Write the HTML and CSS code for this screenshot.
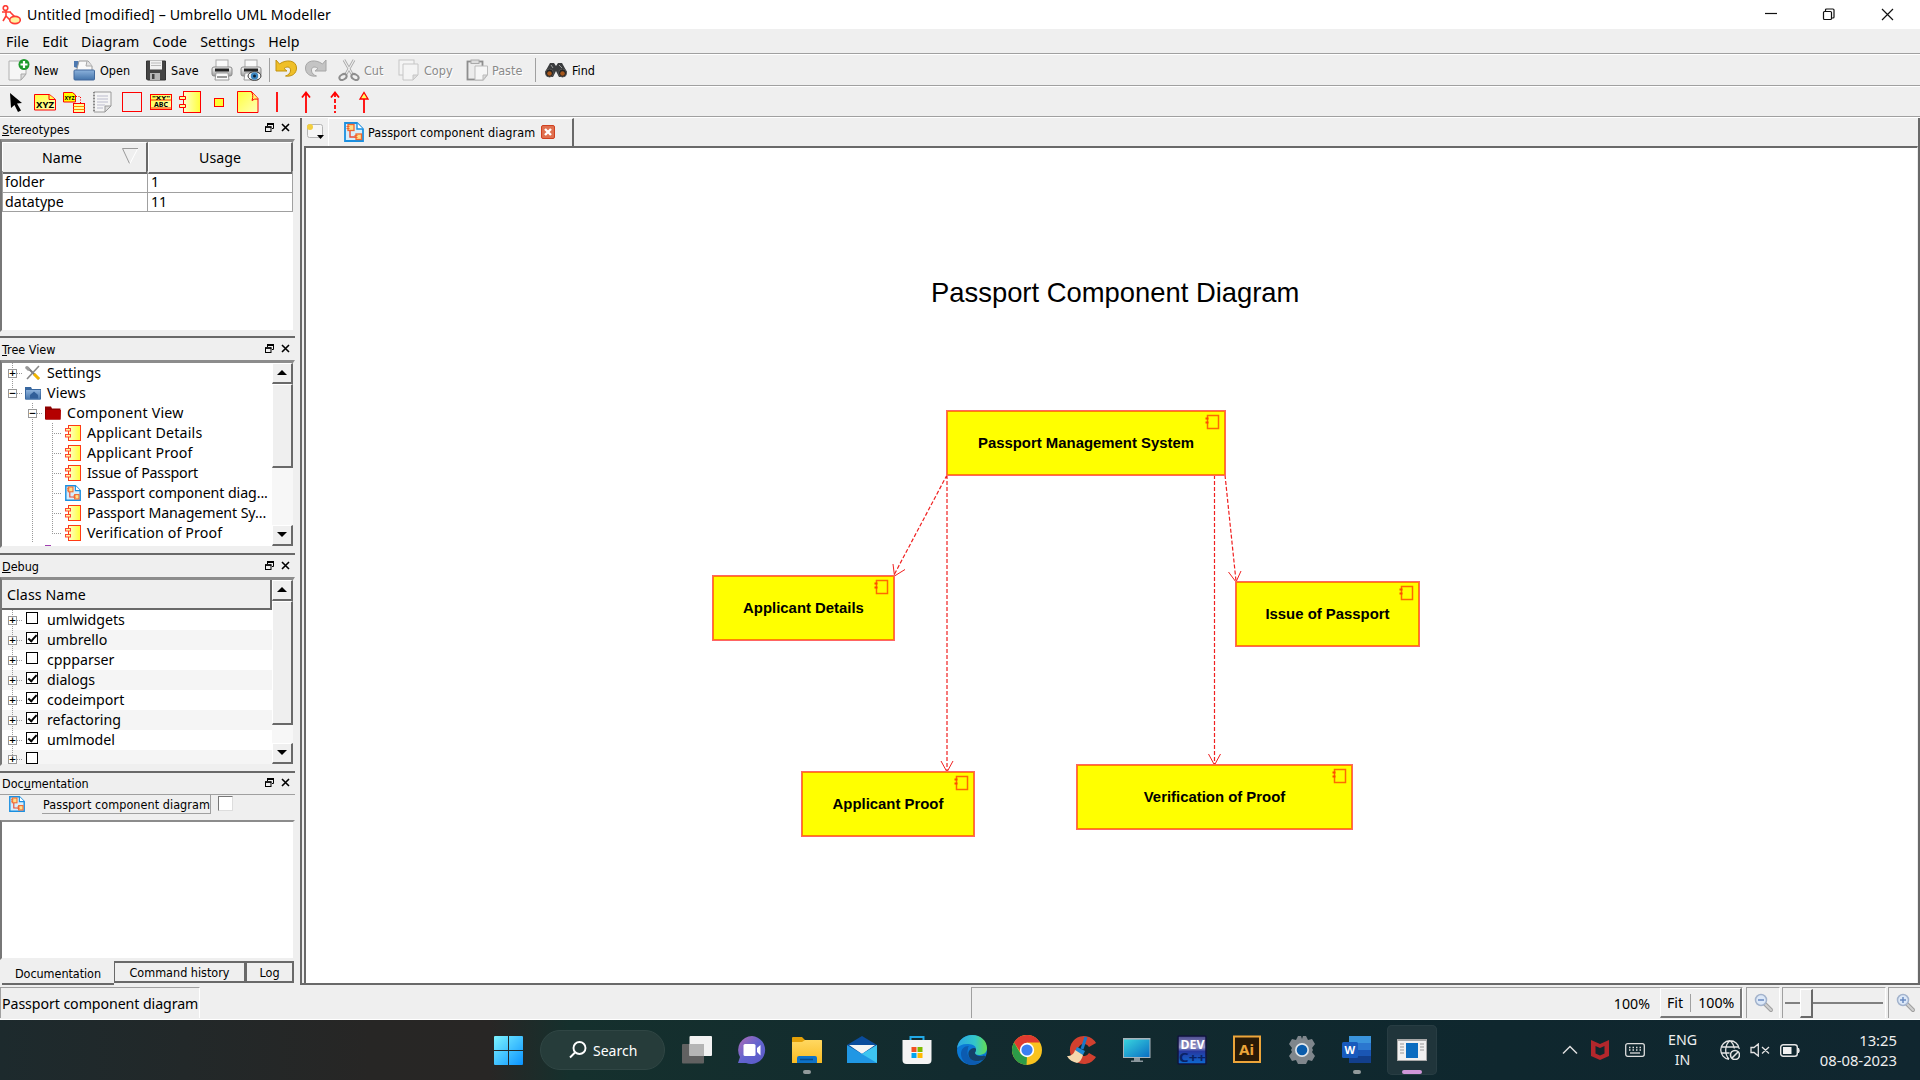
FILE: index.html
```html
<!DOCTYPE html>
<html lang="en">
<head>
<meta charset="utf-8">
<title>Umbrello UML Modeller</title>
<link rel="stylesheet" href="styles.css">
</head>
<body>
<svg class="defs" width="0" height="0">
  <defs>
    <linearGradient id="gy" x1="0" y1="0" x2="1" y2="1"><stop offset="0" stop-color="#ffff3c"/><stop offset="1" stop-color="#ffffb8"/></linearGradient>
    <linearGradient id="gc" x1="0" y1="0" x2="1" y2="0"><stop offset="0" stop-color="#ffffd0"/><stop offset="1" stop-color="#ffff38"/></linearGradient>
    <linearGradient id="gw" x1="0" y1="0" x2="1" y2="1"><stop offset="0" stop-color="#7cf3ff"/><stop offset="1" stop-color="#0a93ff"/></linearGradient>
    <linearGradient id="gg" x1="0" y1="0" x2="0" y2="1"><stop offset="0" stop-color="#fafafa"/><stop offset="1" stop-color="#9c9c9c"/></linearGradient>
    <linearGradient id="gb" x1="0" y1="0" x2="0" y2="1"><stop offset="0" stop-color="#8cb2dc"/><stop offset="1" stop-color="#4474ab"/></linearGradient>
    <linearGradient id="gp" x1="0" y1="0" x2="1" y2="1"><stop offset="0" stop-color="#b36bb4"/><stop offset=".5" stop-color="#6264cf"/><stop offset="1" stop-color="#5a58c6"/></linearGradient>
    <linearGradient id="gf" x1="0" y1="0" x2="0" y2="1"><stop offset="0" stop-color="#ffd861"/><stop offset="1" stop-color="#f9bb22"/></linearGradient>
    <linearGradient id="gm" x1="0" y1="0" x2="1" y2="1"><stop offset="0" stop-color="#38d4de"/><stop offset="1" stop-color="#0a6fc4"/></linearGradient>
    <linearGradient id="ge" x1="0" y1="0" x2="1" y2="0"><stop offset="0" stop-color="#2aa6e4"/><stop offset=".6" stop-color="#33c6c9"/><stop offset="1" stop-color="#63dc52"/></linearGradient>
    <linearGradient id="gd" x1="0" y1="0" x2="0" y2="1"><stop offset="0" stop-color="#4a4a90"/><stop offset=".4" stop-color="#9a9ac8"/><stop offset=".55" stop-color="#2638a0"/><stop offset="1" stop-color="#0d6bd2"/></linearGradient>
    <symbol id="comp" viewBox="0 0 16 16"><rect x="3.5" y=".5" width="12" height="15" fill="url(#gc)" stroke="#ff3b14"/><rect x=".5" y="3.5" width="5" height="2.500" fill="#fff9a0" stroke="#f43"/><rect x=".5" y="9.500" width="5" height="2.500" fill="#fff9a0" stroke="#f43"/></symbol>
    <symbol id="diag" viewBox="0 0 20 20"><path d="M1 1h12l6 6v12H1z" fill="#d6eefc" stroke="#1a8fe0" stroke-width="1.800"/><path d="M13 1v6h6" fill="#fff" stroke="#1a8fe0" stroke-width="1.400"/><path d="M6 8v7h6" fill="none" stroke="#ea4a34" stroke-width="1.400"/><rect x="4" y="2.500" width="6" height="6" fill="#ffdf8a" stroke="#f2662f" stroke-width="1.300"/><path d="M2.500 4.500h3M2.500 6.500h3" stroke="#f2662f"/><rect x="12" y="12" width="5.500" height="5.500" fill="#ffdf8a" stroke="#f2662f" stroke-width="1.300"/><path d="M10.500 13.500h3M10.500 15.500h3" stroke="#f2662f"/></symbol>
    <symbol id="float" viewBox="0 0 9 9"><path d="M2.500 3V1.500h6v4H7" fill="none" stroke="#000"/><path d="M2 1h7" stroke="#000" stroke-width="2"/><rect x=".5" y="4" width="5.500" height="4.500" fill="#efefef" stroke="#000"/><path d="M0 4h6.500" stroke="#000" stroke-width="1.500"/></symbol>
    <symbol id="x" viewBox="0 0 9 9"><path d="M1 1l7 7M8 1L1 8" stroke="#000" stroke-width="1.600"/></symbol>
    <symbol id="nodeicon" viewBox="0 0 16 16"><rect x="3.500" y="1.500" width="11" height="13" fill="none" stroke="#ff6a00" stroke-width="1.500"/><path d="M1.500 4.500h3M1.500 8.500h3" stroke="#ff4a00" stroke-width="2"/></symbol>
    <symbol id="mag" viewBox="0 0 20 20"><path d="M11 11l6 6" stroke="#9f9f9f" stroke-width="4" stroke-linecap="round"/><path d="M11 11l6 6" stroke="#d0d0d0" stroke-width="2" stroke-linecap="round"/><circle cx="7" cy="7" r="5.500" fill="#dce8f8" stroke="#a3b3cc" stroke-width="1.500"/></symbol>
  </defs>
</svg>

<div class="window">
  <header class="titlebar">
    <svg class="appicon" width="20" height="20" viewBox="0 0 20 20" fill="none" stroke="#ff3c34" stroke-width="1.600"><circle cx="4.500" cy="3" r="2.300"/><path d="M1 7h9M5 6v6M5 11l-3 5M5 11l4 4M9 7l5 5"/><ellipse cx="14" cy="15" rx="5.300" ry="3.600" fill="#fff3a0"/></svg>
    <span class="caption">Untitled [modified] – Umbrello UML Modeller</span>
    <svg class="winbtns" width="130" height="16" viewBox="0 0 130 16" fill="none" stroke="#111" stroke-width="1.200"><path d="M1 6.500h12"/><rect x="59.500" y="4.500" width="8" height="8" rx="1"/><path d="M61.500 4V3q0-1 1-1h6.500q1 0 1 1v7q0 1-1 1h-1"/><path d="M118 2l11 11M129 2l-11 11"/></svg>
  </header>

  <nav class="menubar"><span>File</span><span>Edit</span><span>Diagram</span><span>Code</span><span>Settings</span><span>Help</span></nav>

  <div class="toolbar">
    <div class="tb w65"><svg viewBox="0 0 22 22"><path d="M1 2h17v13l-5 6H1z" fill="#f6f6f6" stroke="#b0b0b0"/><path d="M18 15h-5v6z" fill="#ddd" stroke="#aaa"/><circle cx="16" cy="5.500" r="5.500" fill="#1d9a2c"/><path d="M16 2v7M12.500 5.500h7" stroke="#fff" stroke-width="2.200"/></svg><span>New</span></div>
    <div class="tb w73"><svg viewBox="0 0 22 22"><path d="M1 8V2h4l2 2v6" fill="#4c78b0"/><path d="M4 10l2-8h9l4 5v6H3z" fill="#fafafa" stroke="#9a9a9a"/><path d="M14 2l-1 5h6" fill="#e4e4e4" stroke="#aaa"/><rect x="1" y="11" width="20.500" height="10" rx="1" fill="url(#gb)" stroke="#42699c"/></svg><span>Open</span></div>
    <div class="tb w66"><svg viewBox="0 0 22 22"><path d="M1.500 2h19v19h-18l-1-1z" fill="#444" stroke="#333"/><rect x="5" y="1.500" width="12" height="9" fill="#f2f2f2"/><path d="M6 4h10M6 6.500h10" stroke="#bbb"/><rect x="5" y="14" width="10" height="7" fill="#b7b7b7"/><rect x="7" y="15" width="2.500" height="5" fill="#444"/></svg><span>Save</span></div>
    <div class="tb w29"><svg viewBox="0 0 22 22"><rect x="5" y="1" width="12" height="9" fill="#fafafa" stroke="#aaa"/><rect x="1" y="8" width="20" height="9" rx="2" fill="url(#gg)" stroke="#888"/><path d="M4 11h14" stroke="#222" stroke-width="3"/><path d="M5 14h12l1 7H4z" fill="#fafafa" stroke="#999"/><path d="M6 18h10" stroke="#777" stroke-width="1.500"/></svg></div>
    <div class="tb w29"><svg viewBox="0 0 22 22"><rect x="5" y="1" width="12" height="9" fill="#fafafa" stroke="#aaa"/><rect x="1" y="8" width="20" height="9" rx="2" fill="url(#gg)" stroke="#888"/><path d="M4 11h14" stroke="#222" stroke-width="3"/><path d="M5 14h12l1 7H4z" fill="#fafafa" stroke="#999"/><ellipse cx="14.500" cy="17" rx="6.500" ry="4.300" fill="#f4f4f4" stroke="#333"/><circle cx="14.500" cy="17" r="3.700" fill="#3c86c0"/><circle cx="14.500" cy="17" r="1.500" fill="#123"/></svg></div>
    <i class="vsep"></i>
    <div class="tb w30"><svg viewBox="0 0 22 22"><path d="M1 1v11h11L9 9.500c4-3 7-1 6.500 2.500-.5 2.500-2 4-5 5 6.500 1 11-2.500 11-8C21.500 1 11 0 4.500 5z" fill="#efbf28" stroke="#c2920f"/></svg></div>
    <div class="tb w33"><svg viewBox="0 0 22 22"><path d="M21 1v11H10l3-2.500C9 6.500 6 8.500 6.500 12c.5 2.500 2 4 5 5C5 18 .5 14.500.5 9 .5 1 11 0 17.500 5z" fill="#c4c4c4" stroke="#a6a6a6"/></svg></div>
    <div class="tb w60 off"><svg viewBox="0 0 22 22" fill="none"><path d="M6 1l8 14M16 1L8 15" stroke="#a8a8a8" stroke-width="2.800"/><path d="M6 1l8 14M16 1L8 15" stroke="#eee" stroke-width="1.200"/><ellipse cx="5" cy="18" rx="3.800" ry="2.600" stroke="#8e8e8e" stroke-width="2" transform="rotate(-30 5 18)"/><ellipse cx="17" cy="18" rx="3.800" ry="2.600" stroke="#8e8e8e" stroke-width="2" transform="rotate(30 17 18)"/></svg><span>Cut</span></div>
    <div class="tb w68 off"><svg viewBox="0 0 22 22" fill="#f4f4f4" stroke="#c6c6c6"><rect x="1" y="1" width="15" height="15"/><path d="M5 5h15v11l-5 5H5z"/><path d="M20 16h-5v5z" fill="#ddd"/></svg><span>Copy</span></div>
    <div class="tb w70 off"><svg viewBox="0 0 22 22"><rect x="1.500" y="2.500" width="15" height="18" fill="#ececec" stroke="#8e8e8e" stroke-width="1.800"/><rect x="5" y="1" width="8" height="3.500" fill="#ddd" stroke="#aaa"/><path d="M9 7h12.500v9l-4 5H9z" fill="#f6f6f6" stroke="#bbb"/><path d="M21 16h-4v5z" fill="#ddd" stroke="#bbb"/></svg><span>Paste</span></div>
    <i class="vsep wide"></i>
    <div class="tb find"><svg viewBox="0 0 22 22"><path d="M5 4h4l2 3 2-3h4l5 9-3 5h-5l-3-6-3 6H3l-3-5z" fill="#3a3c3e"/><path d="M6 6l2 3M14 6l3 3" stroke="#9a9a9a"/><circle cx="4.500" cy="14" r="4" fill="#222" stroke="#555"/><circle cx="17.500" cy="14" r="4" fill="#222" stroke="#555"/><circle cx="4.500" cy="14.500" r="2.300" fill="#a7571b"/><circle cx="17.500" cy="14.500" r="2.300" fill="#a7571b"/></svg><span>Find</span></div>
  </div>

  <div class="toolbar tools">
    <svg viewBox="0 0 22 22"><path d="M5 2l12 10-5 .5 4 7-3 1.500-3.500-7L6 17z"/></svg>
    <svg viewBox="0 0 22 22"><path d="M.5 3.500h15l6 5v10.500H.5z" fill="url(#gy)" stroke="red"/><path d="M15 3.500v5h6" fill="#ffff50" stroke="red"/><text x="2" y="16.500" font-size="9" font-weight="bold" textLength="18" lengthAdjust="spacingAndGlyphs">XYZ</text></svg>
    <svg viewBox="0 0 22 22"><path d="M.5 1.500h9l3 2.500v7H.5z" fill="#ff0" stroke="red"/><text x="1.500" y="9" font-size="6" font-weight="bold" textLength="10" lengthAdjust="spacingAndGlyphs">XYZ</text><path d="M13 5.500h4.500V12" fill="none" stroke="red" stroke-dasharray="1 1.500"/><rect x="10.500" y="12.500" width="11" height="9" fill="#ff9" stroke="red"/><path d="M10.500 15.500h11M10.500 18.500h11" stroke="#f80"/></svg>
    <svg viewBox="0 0 22 22"><path d="M2 1h17v14l-6 6H2z" fill="#f5f5f5" stroke="#999"/><path d="M19 15h-6v6z" fill="#ddd" stroke="#999"/><path d="M5 5h11M5 8h11M5 11h11M5 14h8M5 17h6" stroke="#bbc"/><path d="M2 1v20" stroke="#888" stroke-dasharray="1 2" stroke-width="2"/></svg>
    <svg viewBox="0 0 22 22"><rect x="1.500" y="1.500" width="19" height="19" fill="none" stroke="red"/></svg>
    <svg viewBox="0 0 22 22"><rect x=".5" y="3.500" width="21" height="15" fill="url(#gy)" stroke="red"/><path d="M.5 9h21M.5 17h21" stroke="#f30"/><text x="2" y="8.500" font-size="5.500" font-weight="bold" textLength="18" lengthAdjust="spacingAndGlyphs">"XY"</text><text x="4" y="15.500" font-size="7" font-weight="bold" textLength="14" lengthAdjust="spacingAndGlyphs">ABC</text></svg>
    <svg viewBox="0 0 22 22"><rect x="4.500" y=".5" width="17" height="21" fill="url(#gc)" stroke="red"/><path d="M.5 5.500h6v3h-6zM.5 13.500h6v3h-6z" fill="#ff9" stroke="red"/></svg>
    <svg viewBox="0 0 22 22"><rect x="6.500" y="7.500" width="9" height="8" fill="#ff3" stroke="red"/></svg>
    <svg viewBox="0 0 22 22"><path d="M.5.500h14l6.500 7v14H.5z" fill="url(#gy)" stroke="red"/><path d="M14 .5q3 3 1 9 2-2 6-1.500" fill="#ffff70" stroke="red"/></svg>
    <svg viewBox="0 0 22 22"><path d="M11 1v20" stroke="red" stroke-width="1.800"/></svg>
    <svg viewBox="0 0 22 22" fill="none" stroke="red" stroke-width="1.800"><path d="M11 2v20M7 6.500l4-5 4 5"/></svg>
    <svg viewBox="0 0 22 22" fill="none" stroke="red" stroke-width="1.800"><path d="M11 2v20" stroke-dasharray="4 2"/><path d="M7 6.500l4-5 4 5"/></svg>
    <svg viewBox="0 0 22 22"><path d="M11 7v15" stroke="red" stroke-width="1.800"/><path d="M7 8l4-6.500L15 8z" fill="#ff6" stroke="red" stroke-width="1.300"/></svg>
  </div>

  <main class="main">
    <aside class="docks">
      <section class="dock stereo">
        <h2><span><u>S</u>tereotypes</span><svg><use href="#float"/></svg><svg><use href="#x"/></svg></h2>
        <div class="frame">
          <div class="grid2 head"><span>Name<svg class="sort" width="16" height="16" viewBox="0 0 16 16" fill="none"><path d="M16 .5H.5L7.500 15.500" stroke="#999"/><path d="M15.500 1L8 15.500" stroke="#fff"/></svg></span><span>Usage</span></div>
          <div class="grid2"><span>folder</span><span>1</span></div>
          <div class="grid2"><span>datatype</span><span>11</span></div>
        </div>
      </section>
      <section class="dock treeview">
        <h2><span><u>T</u>ree View</span><svg><use href="#float"/></svg><svg><use href="#x"/></svg></h2>
        <div class="frame split">
          <ul class="tree">
            <li class="l0"><i class="pm">+</i><svg viewBox="0 0 16 16"><path d="M2 2l12 12" stroke="#777" stroke-width="2"/><path d="M14 1L2 14" stroke="#888" stroke-width="1.600"/><path d="M9 9l5 5" stroke="#f0b400" stroke-width="3"/><path d="M1 1l3 1 1 3-2 1-3-3z" fill="#999"/></svg>Settings</li>
            <li class="l0 loose"><i class="pm">−</i><svg viewBox="0 0 16 16"><path d="M0 2h6l1 2h9v10.500H0z" fill="#3968a0"/><path d="M1 5h14.500l-.5 9.500H1z" fill="url(#gb)"/><path d="M5 10l4-3.500 4 3.500v3.500H5z" fill="#315f99"/></svg>Views</li>
            <li class="l1 loose"><i class="pm">−</i><svg viewBox="0 0 16 16"><path d="M0 1.500h6l1 2h8.500v11H0z" fill="#8e0000"/><path d="M1 5h15l-.5 9.500H1z" fill="#b40000"/></svg>Component View</li>
            <li class="l2 loose"><svg><use href="#comp"/></svg>Applicant Details</li>
            <li class="l2 loose"><svg><use href="#comp"/></svg>Applicant Proof</li>
            <li class="l2 tight"><svg><use href="#comp"/></svg>Issue of Passport</li>
            <li class="l2 snug"><svg><use href="#diag"/></svg>Passport component diag...</li>
            <li class="l2 snug"><svg><use href="#comp"/></svg>Passport Management Sy...</li>
            <li class="l2 last"><svg><use href="#comp"/></svg>Verification of Proof</li>
            <li class="l1 peek"><b></b></li>
          </ul>
          <div class="scroll"><i class="up"></i><i class="thumb t1"></i><em></em><i class="down"></i></div>
        </div>
      </section>
      <section class="dock debug">
        <h2><span><u>D</u>ebug</span><svg><use href="#float"/></svg><svg><use href="#x"/></svg></h2>
        <div class="frame split">
          <div class="debuglist">
            <div class="classname">Class Name</div>
            <ul class="checks">
              <li><i class="pm">+</i><i class="box"></i>umlwidgets</li>
              <li><i class="pm">+</i><i class="box on"></i>umbrello</li>
              <li><i class="pm">+</i><i class="box"></i>cppparser</li>
              <li><i class="pm">+</i><i class="box on"></i>dialogs</li>
              <li><i class="pm">+</i><i class="box on"></i>codeimport</li>
              <li><i class="pm">+</i><i class="box on"></i>refactoring</li>
              <li><i class="pm">+</i><i class="box on"></i>umlmodel</li>
              <li class="cut"><i class="pm">+</i><i class="box"></i></li>
            </ul>
          </div>
          <div class="scroll"><i class="up"></i><i class="thumb t2"></i><em></em><i class="down"></i></div>
        </div>
      </section>
      <section class="dock docs">
        <h2><span>Doc<u>u</u>mentation</span><svg><use href="#float"/></svg><svg><use href="#x"/></svg></h2>
        <div class="docrow"><svg><use href="#diag"/></svg><span>Passport component diagram</span><i></i></div>
        <div class="frame"></div>
        <div class="docktabs"><span class="sel">Documentation</span><span>Command history</span><span>Log</span></div>
      </section>
    </aside>

    <section class="workspace">
      <div class="tabs">
        <svg class="newtab" width="20" height="17" viewBox="0 0 20 17"><rect x="1.500" y="1.500" width="15" height="13" rx="2" fill="#f6f6f6" stroke="#b4b4b4"/><circle cx="4" cy="4" r="3" fill="#f3cf3f"/><path d="M11 12h7l-3.500 4z"/></svg>
        <div class="tab"><svg class="tabicon"><use href="#diag"/></svg><span>Passport component diagram</span><svg class="close" viewBox="0 0 14 14"><rect x=".5" y=".5" width="13" height="13" rx="1.500" fill="#e0704f" stroke="#cf4020"/><path d="M4 4l6 6M10 4l-6 6" stroke="#fff" stroke-width="2.400"/></svg></div>
      </div>
      <div class="canvas">
        <svg class="links" width="1609" height="834" viewBox="306 148 1609 834" fill="none" stroke="#f02020">
          <g stroke-dasharray="4 2" stroke-width="1.200"><path d="M947 475L894 575M947 475V771M1214.500 475V764M1225 475L1236 581"/></g>
          <g><path d="M893 564l1.500 12 10.500-6.500M941 761l6 11 6-11M1208.500 754l6 11 6-11M1228.500 572l7.500 10 5-11"/></g>
        </svg>
        <div class="heading">Passport Component Diagram</div>
        <div class="node pms">Passport Management System<svg><use href="#nodeicon"/></svg></div>
        <div class="node ad">Applicant Details<svg><use href="#nodeicon"/></svg></div>
        <div class="node iop">Issue of Passport<svg><use href="#nodeicon"/></svg></div>
        <div class="node ap">Applicant Proof<svg><use href="#nodeicon"/></svg></div>
        <div class="node vop">Verification of Proof<svg><use href="#nodeicon"/></svg></div>
      </div>
    </section>
  </main>

  <footer class="status">
    <div class="cell msg">Passport component diagram</div>
    <div class="cell zoomcell"><span>100%</span><div class="fit"><span>Fit</span><span>100%</span></div></div>
    <div class="cell mag"><svg width="20" height="20"><use href="#mag"/><path d="M4 7h6" stroke="#6a8ac0" stroke-width="1.500"/></svg></div>
    <div class="cell slider"><i class="a"></i><i class="knob"></i><i class="b"></i></div>
    <div class="cell mag last"><svg width="20" height="20"><use href="#mag"/><path d="M4 7h6M7 4v6" stroke="#6a8ac0" stroke-width="1.500"/></svg></div>
  </footer>
</div>

<div class="taskbar">
  <svg class="start" width="29" height="29" viewBox="0 0 29 29"><path d="M0 1q0-1 1-1h13v14H0zM15 0h13q1 0 1 1v13H15zM0 15h14v14H1q-1 0-1-1zM15 15h14v13q0 1-1 1H15z" fill="url(#gw)"/></svg>
  <div class="search"><svg width="18" height="18" viewBox="0 0 18 18" fill="none" stroke="#fff" stroke-width="1.900"><circle cx="10.500" cy="7" r="6"/><path d="M6 11.500L1 16.500"/></svg>Search</div>
  <div class="apps">
    <div><svg viewBox="0 0 30 30"><rect x="0" y="9" width="22" height="19.500" rx="1" fill="#616161"/><rect x="7.500" y="1" width="22.500" height="20" rx="1" fill="#f2f2f2"/><rect x="7.500" y="9" width="14.500" height="12" fill="#b5b5b5"/></svg></div>
    <div><svg viewBox="0 0 30 30"><path d="M15 1a14 14 0 1 1-6 27H1l2-6A14 14 0 0 1 15 1z" fill="url(#gp)"/><rect x="6.500" y="9" width="12" height="12" rx="1.500" fill="#fff"/><path d="M20 13l3.500-3v10.500L20 17z" fill="#fff"/></svg></div>
    <div class="run"><svg viewBox="0 0 30 30"><path d="M0 3q0-1 1-1h9l3 3h16q1 0 1 1v22H0z" fill="#e3a008"/><path d="M0 7h10l3-2h16q1 0 1 1v22H0z" fill="url(#gf)"/><path d="M5 28v-5q0-2 2-2h16q2 0 2 2v5z" fill="#0d72c8"/><path d="M8 24.500h13" stroke="#074a8a" stroke-width="1.500"/></svg></div>
    <div><svg viewBox="0 0 30 30"><path d="M0 10L15 1l15 9-15 10z" fill="#0a4c9c"/><path d="M2 10h26l-13 9z" fill="#f4f4f4"/><path d="M0 10l15 9 15-9v18H0z" fill="#2097e4"/><path d="M30 10v18L15 19z" fill="#3dc5f0"/></svg></div>
    <div><svg viewBox="0 0 30 30"><path d="M8.500 6V2h13v4" fill="none" stroke="#21a9e6" stroke-width="2"/><path d="M.5 5h29v20q0 4-4 4h-21q-4 0-4-4z" fill="#f4f4f4"/><path d="M9.500 12h5v5h-5z" fill="#f25022"/><path d="M15.500 12h5v5h-5z" fill="#7fba00"/><path d="M9.500 18h5v5h-5z" fill="#00a4ef"/><path d="M15.500 18h5v5h-5z" fill="#ffb900"/></svg></div>
    <div><svg viewBox="0 0 30 30"><circle cx="15" cy="15" r="15" fill="#0b78d4"/><path d="M0 13C1 5 8 0 15 0c9 0 15 6 15 13 0 5-4 7-8 7-3 0-4-1-4-2 0-1 1-1 1-4 0-4-5-5-9-5-5 0-8 2-10 4z" fill="url(#ge)"/><path d="M11 14c-2 5 1 14 13 12-2 3-6 4-9 4C8 30 4 24 4 19s3-8 8-8c-1 1-1 2-1 3z" fill="#0c5bb0"/><path d="M19 14c0 3-1 3-1 4 0 2 4 4 9 2.500l2 1C27 26 22 26 19 26c-6 0-9-6-7-10 2-3 6-4 7-2z" fill="#15406a"/></svg></div>
    <div><svg viewBox="0 0 30 30"><circle cx="15" cy="15" r="15" fill="#f9c31f"/><path d="M2 7.500A15 15 0 0 1 28 7.500H15L9 18z" fill="#e03a2f"/><path d="M2 7.500l6.500 11L15 22l-.5 8A15 15 0 0 1 2 7.500z" fill="#2c9b48"/><circle cx="15" cy="15" r="7.200" fill="#fff"/><circle cx="15" cy="15" r="5.600" fill="#3b7ff0"/></svg></div>
    <div><svg viewBox="0 0 30 30"><path d="M29 8a14 14 0 1 0 0 14l-7-4a6 6 0 1 1 0-6z" fill="#d2402f"/><path d="M19 2l-4 12" stroke="#1a78c8" stroke-width="3"/><path d="M10 12l8 4-2 4-8-4z" fill="#1e86d4"/><path d="M8 15l8 5c-1 4-3 7-6 8-4-1-8-3-10-7 4 0 7-2 8-6z" fill="#f5d8ae"/></svg></div>
    <div><svg viewBox="0 0 30 30"><rect x="1" y="3" width="27.500" height="20" fill="#a9b4bb"/><rect x="2" y="4.500" width="25.500" height="17.500" fill="url(#gm)"/><path d="M12 23h6v2.500h3V27H9v-1.500h3z" fill="#8b979d"/></svg></div>
    <div><svg viewBox="0 0 30 30"><rect x="1" y="1" width="28" height="28" rx="1" fill="url(#gd)" stroke="#10143c" stroke-width="1.500"/><text x="3.500" y="14" font-size="11.500" font-weight="bold" fill="#fff" textLength="24" lengthAdjust="spacingAndGlyphs">DEV</text><text x="2" y="27" font-size="11.500" font-weight="bold" fill="#0a2264" textLength="27" lengthAdjust="spacingAndGlyphs">C++</text></svg></div>
    <div><svg viewBox="0 0 30 30"><rect x="2" y="1.500" width="26" height="25.500" fill="#2a1a06" stroke="#eda53a" stroke-width="2"/><text x="7" y="20" font-size="15" font-weight="bold" fill="#eda53a" textLength="15" lengthAdjust="spacingAndGlyphs">Ai</text></svg></div>
    <div><svg viewBox="0 0 30 30"><path d="M11 1h3l1 3 1-3h3l2 4 4-1 3 5-3 4 1 2-1 2 3 4-3 5-4-1-2 4h-8l-2-4-4 1-3-5 3-4-1-2 1-2-3-4 3-5 4 1z" fill="#7f868c"/><circle cx="15" cy="15" r="7" fill="#dfe5ea"/><circle cx="15" cy="15" r="5.300" fill="#0a5cab"/></svg></div>
    <div class="run"><svg viewBox="0 0 30 30"><path d="M7 1h22v7H7z" fill="#3a94dc"/><path d="M7 8h22v7H7z" fill="#2b77cf"/><path d="M7 15h22v7H7z" fill="#1a56b4"/><path d="M7 21h22v7H7z" fill="#123f8c"/><rect y="7" width="16" height="16" rx="1.500" fill="#185abd"/><text x="2.500" y="19" font-size="11" font-weight="bold" fill="#fff">W</text></svg></div>
    <div class="active"><svg viewBox="0 0 30 30"><rect y="4" width="30" height="22" fill="#a8a8a8"/><rect x="1" y="6" width="28" height="19" fill="#f0f0f0"/><rect x="9" y="8" width="12" height="15" fill="#0a6cc0"/><path d="M3 9h4M3 12h4M3 15h4M3 18h4M23 9h4M23 12h4M23 15h4" stroke="#999"/></svg></div>
  </div>
  <div class="tray">
    <svg class="chev" width="16" height="10" viewBox="0 0 16 10"><path d="M1 8.500L8 1.500l7 7" fill="none" stroke="#ddd" stroke-width="1.500"/></svg>
    <svg class="mc" width="18" height="20" viewBox="0 0 18 20"><path d="M0 0l9 4 9-4v16l-9 4-9-4zM4.500 6v7.500L9 15.500l4.500-2V6L9 8z" fill="#b3272c" fill-rule="evenodd"/></svg>
    <svg class="kb" width="20" height="14" viewBox="0 0 20 14" fill="none" stroke="#ddd" stroke-width="1.300"><rect x=".7" y=".7" width="18.600" height="12.600" rx="2"/><path d="M4 4.500h13M4 7h13" stroke-dasharray="1.500 2"/><path d="M5 10h10"/></svg>
    <div class="lang">ENG<br>IN</div>
    <svg class="globe" width="20" height="20" viewBox="0 0 20 20" fill="none" stroke="#e4e4e4" stroke-width="1.300"><path d="M9 19.300A9.300 9.300 0 1 1 19.300 9M1 7h18M1.500 13h8M9 19C4 14 5 4 10 .7 13 3 14 6 14.300 8.500"/><circle cx="15" cy="15" r="4.500" stroke-width="1.600"/><path d="M12 18l6-6" stroke-width="1.600"/></svg>
    <svg class="spk" width="20" height="14" viewBox="0 0 20 14" fill="none" stroke="#e4e4e4" stroke-width="1.300"><path d="M1 4.500h3L8.300 1v12L4 9.500H1zM12 4l7 6.500M19 4l-7 6.500"/></svg>
    <svg class="bat" width="20" height="13" viewBox="0 0 20 13"><rect x=".7" y=".7" width="16.600" height="11.600" rx="2.500" fill="none" stroke="#e4e4e4" stroke-width="1.400"/><rect x="3" y="3" width="8.500" height="7" fill="#f2f2f2"/><path d="M18.500 4q1.500 2.500 0 5z" fill="#e4e4e4" stroke="#e4e4e4"/></svg>
    <div class="clock">13:25<br>08-08-2023</div>
  </div>
</div>
</body>
</html>
```
FILE: styles.css
```css
* { box-sizing: border-box; }
body { margin: 0; width: 1920px; height: 1080px; overflow: hidden; background: #efefef; color: #000; font: 14.2px "Noto Sans", "Open Sans", sans-serif; white-space: nowrap; }
svg { display: block; flex: none; }
svg text { font-family: "Noto Sans", sans-serif; }
ul { list-style: none; margin: 0; padding: 0; }
i, em { font-style: normal; }
.defs { position: absolute; }
.window { display: flex; flex-direction: column; height: 1020px; }

.titlebar { height: 29px; background: #fff; display: flex; align-items: center; padding: 0 26px 0 1px; }
.titlebar .appicon { margin-right: 6px; }
.caption { flex: 1; font-size: 14.2px; letter-spacing: .1px; }
.menubar { height: 25px; display: flex; align-items: center; padding: 1px 0 0 6px; border-bottom: 1px solid #a0a0a0; letter-spacing: .12px; }
.menubar span { margin-right: 13px; }

.toolbar { height: 32px; flex: none; display: flex; align-items: center; padding-left: 8px; border-top: 1px solid #fff; border-bottom: 1px solid #a0a0a0; font: 12.5px "DejaVu Sans Condensed", "Noto Sans", sans-serif; }
.tb { display: flex; align-items: center; gap: 4px; flex: none; }
.tb svg, .tools svg { width: 22px; height: 22px; }
.w65 { width: 65px; } .w73 { width: 72px; gap: 5px; } .w66 { width: 66px; gap: 4px; } .w29 { width: 29px; } .w30 { width: 30px; } .w33 { width: 33px; } .w60 { width: 60px; } .w68 { width: 68px; } .w70 { width: 70px; }
.find { gap: 5px; }
.off { color: #8a8a8a; }
.off span { text-shadow: 1px 1px #fff; }
.vsep { width: 1px; height: 24px; background: #a0a0a0; margin-right: 5px; }
.vsep.wide { margin: 0 9px 0 -1px; }
.tools { padding-left: 5px; gap: 7px; height: 31px; }

.main { flex: 1; display: flex; border-top: 1px solid #fff; min-height: 0; }
.docks { width: 295px; flex: none; display: flex; flex-direction: column; }
.dock { display: flex; flex-direction: column; flex: none; border-bottom: 2px solid #696969; min-height: 0; }
.dock h2 { margin: 0; height: 21px; padding: 1px 5px 0 2px; display: flex; align-items: center; gap: 7px; font: 12.5px "DejaVu Sans Condensed", sans-serif; }
.dock h2 span { flex: 1; }
.dock h2 svg { width: 9px; height: 9px; margin-bottom: 3px; }
.frame { background: #fff; border: 2px solid; border-color: #8c8c8c #efefef #efefef #777; height: 193px; overflow: hidden; border-top-width: 3px; }
.stereo { height: 220px; }
.treeview { height: 217px; }
.debug { height: 218px; }
.dock.docs { flex: 1; border: 0; }
.treeview h2 { height: 22px; }
.treeview .frame { height: 188px; }
.debug h2 { height: 22px; }
.debug .frame { height: 189px; }
.docs h2 { height: 21px; padding-top: 1px; }
.split { display: flex; }

.grid2 { display: grid; grid-template-columns: 146px 145px; line-height: 19px; height: 20px; width: 291px; }
.grid2 > span { border: 1px solid #a0a0a0; border-width: 0 1px 1px 0; padding-left: 3px; }
.grid2 > span:first-child { border-left-width: 1px; padding-left: 2px; }
.grid2.head { height: 30px; line-height: 29px; text-align: center; margin-bottom: -1px; }
.grid2.head > span { background: #efefef; border: 1px solid; border-color: #fff #696969 #696969 #fff; border-bottom-width: 2px; border-right-width: 2px; display: flex; justify-content: center; padding: 0; }
.grid2.head > span:first-child { justify-content: flex-start; padding-left: 39px; border-left-width: 1px; }
.grid2:nth-child(2) { height: 21px; line-height: 21px; }
.sort { margin: 5px 0 0 40px; }

.tree { flex: 1; background: repeating-linear-gradient(#999 0 1px, transparent 1px 2px) 10px 0 / 1px 30px no-repeat; overflow: hidden; }
.tree li { height: 20px; display: flex; align-items: center; position: relative; line-height: 20px; }
.tree li svg { width: 16px; height: 16px; margin-right: 6px; }
.l0 { padding-left: 6px; } .l1 { padding-left: 26px; } .l2 { padding-left: 63px; }
.loose { letter-spacing: .22px; } .tight { letter-spacing: -.2px; } .snug { letter-spacing: -.08px; } .last { letter-spacing: .14px; }
.pm { width: 9px; height: 9px; flex: none; border: 1px solid #999; background: #fff; margin-right: 8px; font: bold 9px/7px "DejaVu Sans", sans-serif; letter-spacing: 0; display: flex; justify-content: center; position: relative; z-index: 1; }
.pm::after { content: ""; position: absolute; left: 8px; top: 3px; width: 6px; height: 1px; background: repeating-linear-gradient(90deg, #999 0 1px, transparent 1px 2px); }
.l2::before { content: ""; position: absolute; left: 50px; top: 0; width: 10px; height: 20px; background: repeating-linear-gradient(#999 0 1px, transparent 1px 2px) 0 0 / 1px 100% no-repeat, repeating-linear-gradient(90deg, #999 0 1px, transparent 1px 2px) 0 10px / 10px 1px no-repeat; }
.l2.last::before { height: 11px; }
.l2::after, .l1:not(.peek)::before { content: ""; position: absolute; left: 30px; top: 0; width: 1px; height: 20px; background: repeating-linear-gradient(#999 0 1px, transparent 1px 2px); }
.peek b { margin: -16px 0 0 17px; width: 6px; height: 1px; background: #a040b0; }

.scroll { width: 21px; flex: none; display: flex; flex-direction: column; background: #f7f7f7; }
.scroll i { display: block; background: #efefef; border: 1px solid; border-color: #fff #696969 #696969 #fff; border-width: 1px 2px 2px 1px; }
.up, .down { height: 21px; flex: none; }
.up::after, .down::after { content: ""; display: block; width: 0; margin: 6px auto; border: 5px solid transparent; }
.up::after { border-top: 0; border-bottom-color: #000; }
.down::after { border-bottom: 0; border-top-color: #000; }
.scroll em { flex: 1; }
.t1 { height: 84px; flex: none; }
.t2 { height: 124px; flex: none; }

.debuglist { flex: 1; }
.classname { height: 30px; padding: 0 5px; line-height: 30px; letter-spacing: .1px; background: #efefef; border: solid #696969; border-width: 0 2px 2px 0; }
.checks { background: repeating-linear-gradient(#999 0 1px, transparent 1px 2px) 10px 0 / 1px 160px no-repeat; }
.checks li { height: 20px; line-height: 20px; display: flex; align-items: center; padding-left: 6px; position: relative; }
.checks li:nth-child(even) { background: repeating-linear-gradient(#999 0 1px, transparent 1px 2px) 10px 0 / 1px 20px no-repeat #f5f5f5; }
.checks .cut { align-items: flex-start; padding-top: 5px; }
.box { width: 12px; height: 12px; flex: none; border: 1px solid #000; margin: -4px 9px 0 1px; background: #fff; }
.cut .box { margin-top: -3px; }
.box.on::after { content: ""; display: block; width: 7px; height: 3px; margin: 2px 0 0 1px; border: solid #000; border-width: 0 0 2px 2px; transform: rotate(-48deg); }

.docrow { height: 26px; border-top: 1px solid #a0a0a0; display: flex; align-items: flex-start; padding-left: 9px; font: 12.5px/17px "DejaVu Sans Condensed", sans-serif; }
.docrow svg { width: 16px; height: 16px; margin: 1px 17px 0 0; }
.docrow span { border: 1px solid #a0a0a0; border-width: 0 1px 1px 0; padding: 1px 0 0 1px; width: 169px; letter-spacing: .06px; }
.docrow i { width: 15px; height: 15px; margin: 1px 0 0 7px; background: #fff; border: 1px solid; border-color: #777 #ddd #ddd #777; }
.docs .frame { height: 142px; border-top-width: 2px; margin-bottom: 1px; }
.docktabs { display: flex; align-items: flex-start; font: 12.5px/19px "DejaVu Sans Condensed", sans-serif; padding-left: 2px; }
.docktabs span { height: 22px; text-align: center; border: solid #696969; border-width: 2px 2px 2px 1px; width: 132px; }
.docktabs span:last-child { width: 48px; }
.docktabs .sel { width: 112px; height: 24px; border-width: 0 0 2px 0; line-height: 25px; letter-spacing: -.05px; }

.workspace { flex: 1; margin-left: 5px; border: solid #696969; border-width: 0 2px 2px 2px; display: flex; flex-direction: column; min-width: 0; }
.tabs { height: 28px; display: flex; align-items: flex-start; padding-left: 5px; flex: none; }
.newtab { margin: 5px 2px 0 -1px; }
.tab { width: 246px; height: 28px; border-right: 2px solid #696969; border-left: 1px solid #fff; border-top: 1px solid #fff; display: flex; align-items: center; padding: 0 0 1px 15px; font: 12.5px "DejaVu Sans Condensed", sans-serif; }
.tabicon { width: 20px; height: 20px; margin-right: 4px; }
.tab .close { width: 14px; height: 14px; margin-left: 7px; }
.tab span { width: 166px; letter-spacing: .07px; }
.canvas { flex: 1; margin-left: 2px; background: #fff; border: solid #696969; border-width: 2px 1px 0 2px; border-right-color: #eee; position: relative; overflow: hidden; }

/* free diagram canvas; its inner origin is (306, 148) */
.links { position: absolute; left: 0; top: 0; }
.heading { position: absolute; left: 625px; top: 128px; font: 27.4px/34px "Liberation Sans", Arial, sans-serif; }
.node { position: absolute; height: 66px; background: #ff0; border: 1px solid #ff6464; box-shadow: inset 0 0 0 1px #ff8400; display: flex; align-items: center; justify-content: center; padding-bottom: 1px; font: bold 14.9px "Liberation Sans", Arial, sans-serif; }
.node svg { position: absolute; right: 5px; top: 3px; width: 16px; height: 16px; }
.pms { left: 640px; top: 262px; width: 280px; }
.ad { left: 406px; top: 427px; width: 183px; }
.iop { left: 929px; top: 433px; width: 185px; }
.ap { left: 495px; top: 623px; width: 174px; }
.vop { left: 770px; top: 616px; width: 277px; }

.status { height: 35px; flex: none; display: flex; padding: 2px 0 1px; border-bottom: 1px solid #fff; }
.cell { border: solid #a0a0a0; border-width: 1px 0 0 1px; border-right: 1px solid #fff; display: flex; align-items: center; flex: none; }
.msg { width: 200px; padding-left: 1px; margin-right: 771px; letter-spacing: -.08px; }
.zoomcell { width: 772px; justify-content: flex-end; margin-right: 3px; }
.zoomcell > span { margin-right: 10px; }
.fit { display: flex; align-items: center; height: 30px; width: 82px; border: solid; border-width: 1px 2px 2px 1px; border-color: #fff #777 #777 #fff; padding-left: 6px; }
.fit span:last-child { border-left: 1px solid #a0a0a0; padding-left: 7px; margin-left: 7px; line-height: 18px; }
.mag { width: 34px; margin-right: 2px; padding-left: 7px; }
.slider { width: 104px; margin-right: 2px; padding: 0 2px; }
.slider .a, .slider .b { height: 2px; background: #808080; width: 15px; }
.slider .b { flex: 1; }
.slider .knob { width: 13px; height: 29px; border: solid; border-width: 1px 2px 2px 1px; border-color: #fff #696969 #696969 #fff; }

.taskbar { height: 60px; display: flex; align-items: center; background: linear-gradient(90deg, #1d2a2d 0, #272625 370px, #282625 490px, #15302d 570px, #122b2f 960px, #0f272e 1500px, #10262f 1920px); color: #eee; }
.start { margin: 1px 17px 0 494px; }
.search { width: 125px; height: 40px; border-radius: 20px; background: #263c3a; border: 1px solid #304644; display: flex; align-items: center; padding-left: 28px; color: #fff; gap: 6px; font-size: 14px; }
.search svg { margin-bottom: 1px; }
.apps { display: grid; grid-template-columns: repeat(14, 55px); margin-left: 4.5px; }
.apps > div { height: 50px; display: flex; flex-direction: column; align-items: center; padding-top: 10px; }
.apps svg { width: 30px; height: 30px; }
.apps .run::after, .apps .active::after { content: ""; width: 8px; height: 4px; border-radius: 2px; background: #929a9b; margin-top: 5px; }
.apps .active { width: 50px; margin-left: 2.5px; background: #20353b; border-radius: 5px; box-shadow: inset 0 0 0 1px #283d43; }
.apps .active::after { width: 20px; background: #cf96d8; }
.tray { margin-left: auto; display: flex; align-items: center; padding-right: 23px; line-height: 20px; }
.chev { margin-right: 13px; }
.mc { margin-right: 16px; }
.lang { width: 75px; text-align: center; }
.spk { margin: 0 10px; }
.clock { width: 97px; text-align: right; font-size: 14.8px; margin-top: -1px; }
```
